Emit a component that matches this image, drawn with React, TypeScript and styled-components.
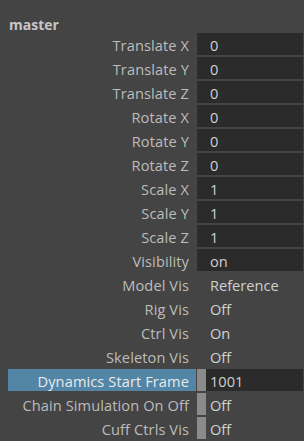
import React from "react";
import styled, { createGlobalStyle } from "styled-components";

type Kind = "box" | "plain" | "handle";

type Attr = {
  label: string;
  value: string;
  kind: Kind;
  selected?: boolean;
  boxed?: boolean;
};

const attrs: Attr[] = [
  { label: "Translate X", value: "0", kind: "box" },
  { label: "Translate Y", value: "0", kind: "box" },
  { label: "Translate Z", value: "0", kind: "box" },
  { label: "Rotate X", value: "0", kind: "box" },
  { label: "Rotate Y", value: "0", kind: "box" },
  { label: "Rotate Z", value: "0", kind: "box" },
  { label: "Scale X", value: "1", kind: "box" },
  { label: "Scale Y", value: "1", kind: "box" },
  { label: "Scale Z", value: "1", kind: "box" },
  { label: "Visibility", value: "on", kind: "box" },
  { label: "Model Vis", value: "Reference", kind: "plain" },
  { label: "Rig Vis", value: "Off", kind: "plain" },
  { label: "Ctrl Vis", value: "On", kind: "plain" },
  { label: "Skeleton Vis", value: "Off", kind: "plain" },
  { label: "Dynamics Start Frame", value: "1001", kind: "handle", selected: true, boxed: true },
  { label: "Chain Simulation On Off", value: "Off", kind: "handle" },
  { label: "Cuff Ctrls Vis", value: "Off", kind: "handle" },
];

const Global = createGlobalStyle`
  html, body {
    margin: 0;
    padding: 0;
    background: #444444;
  }
  body {
    font-family: "Open Sans", "Noto Sans", sans-serif;
  }
`;

const Panel = styled.div`
  width: 304px;
  height: 441px;
  background: #444444;
  overflow: hidden;
`;

const Header = styled.div`
  height: 33px;
  padding-left: 9px;
  padding-top: 15px;
  display: flex;
  align-items: center;
  box-sizing: border-box;
  color: #c6c6c6;
  font-weight: 700;
  font-size: 14px;
`;

const List = styled.div`
  display: flex;
  flex-direction: column;
  gap: 2px;
`;

const Row = styled.div`
  display: grid;
  grid-template-columns: 189px 1fr;
  height: 22px;
  padding-left: 8px;
`;

const Label = styled.div<{ $selected?: boolean }>`
  display: flex;
  align-items: center;
  justify-content: flex-end;
  padding-right: 7px;
  padding-top: 1px;
  margin-right: 1px;
  font-size: 14.6px;
  letter-spacing: 0.1px;
  white-space: nowrap;
  color: ${(p) => (p.$selected ? "#eaeaea" : "#bcbcbc")};
  background: ${(p) => (p.$selected ? "#5285a6" : "transparent")};
`;

const Value = styled.div`
  display: flex;
  align-items: stretch;
  min-width: 0;
`;

const Handle = styled.div`
  width: 9px;
  flex: none;
  background: #8b8b8b;
`;

const Field = styled.div<{ $boxed?: boolean; $inset: number }>`
  flex: 1;
  display: flex;
  align-items: center;
  padding-left: ${(p) => p.$inset}px;
  padding-top: 1px;
  font-size: 14.6px;
  color: #d0d0d0;
  background: ${(p) => (p.$boxed ? "#2b2b2b" : "transparent")};
  margin-right: 1px;
`;

export default function App() {
  return (
    <Panel>
      <Global />
      <Header>master</Header>
      <List>
        {attrs.map((a) => (
          <Row key={a.label}>
            <Label $selected={a.selected}>{a.label}</Label>
            <Value>
              {a.kind === "handle" && <Handle />}
              <Field
                $boxed={a.kind === "box" || a.boxed}
                $inset={a.kind === "handle" ? 4 : 13}
              >
                {a.value}
              </Field>
            </Value>
          </Row>
        ))}
      </List>
    </Panel>
  );
}
